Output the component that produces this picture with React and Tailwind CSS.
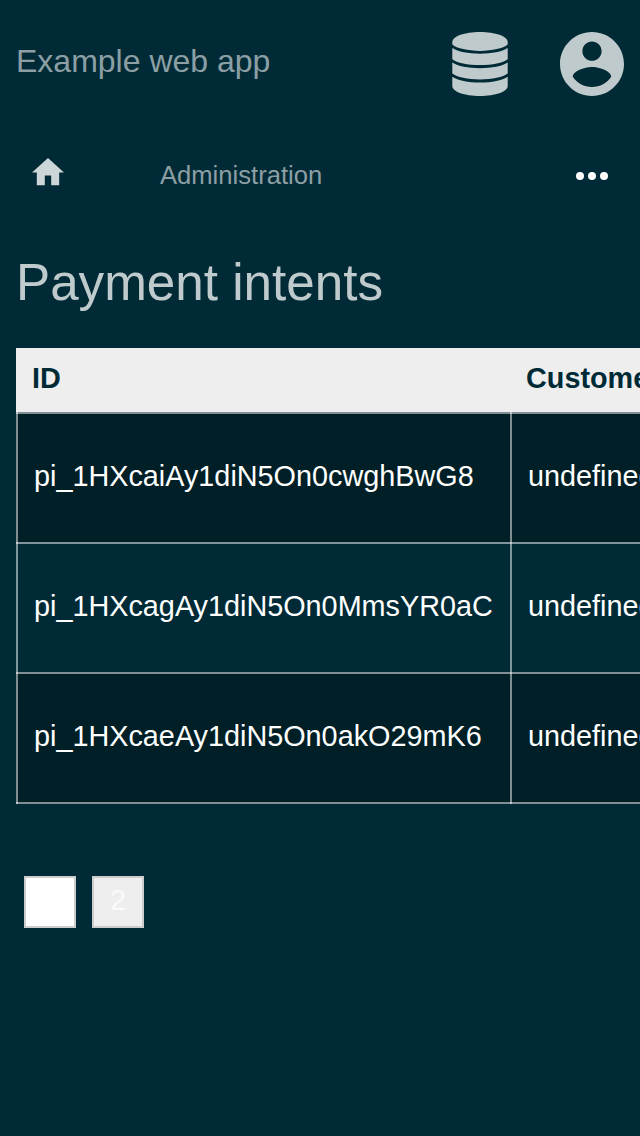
const rows = [
  "pi_1HXcaiAy1diN5On0cwghBwG8",
  "pi_1HXcagAy1diN5On0MmsYR0aC",
  "pi_1HXcaeAy1diN5On0akO29mK6",
];

function DatabaseIcon() {
  return (
    <svg viewBox="0 0 64 64" className="size-16 fill-[#bfcacd]" aria-hidden="true">
      <path d="M32 0C16.7 0 4.3 4.3 4.3 10V12.6C9 16.5 19.5 18.9 32 18.9S55 16.5 59.7 12.6V10C59.7 4.3 47.3 0 32 0Z" />
      <path d="M4.3 16.1C10 19.7 20 21.8 32 21.8S54 19.7 59.7 16.1V27.2C55 30.8 44.5 33.1 32 33.1S9 30.8 4.3 27.2Z" />
      <path d="M4.3 30.5C10 34.1 20 36.2 32 36.2S54 34.1 59.7 30.5V41.6C55 45.2 44.5 47.5 32 47.5S9 45.2 4.3 41.6Z" />
      <path d="M4.3 44.8C10 48.4 20 50.6 32 50.6S54 48.4 59.7 44.8V54C59.7 59.7 47.3 64 32 64S4.3 59.7 4.3 54Z" />
    </svg>
  );
}

function AccountIcon() {
  return (
    <svg viewBox="2 2 20 20" className="size-16 fill-[#bfcacd]" aria-hidden="true">
      <path d="M12 2C6.48 2 2 6.48 2 12s4.48 10 10 10 10-4.48 10-10S17.52 2 12 2zm0 3c1.66 0 3 1.34 3 3s-1.34 3-3 3-3-1.34-3-3 1.34-3 3-3zm0 14.2c-2.5 0-4.71-1.28-6-3.22.03-1.99 4-3.08 6-3.08 1.99 0 5.97 1.09 6 3.08-1.29 1.94-3.5 3.22-6 3.22z" />
    </svg>
  );
}

export default function App() {
  return (
    <div className="h-[1136px] w-full overflow-hidden bg-[#002b36] px-4 font-['Liberation_Sans',Arial,sans-serif]">
      <header className="flex h-32 items-center justify-between">
        <div className="pb-1.5 text-[32px] leading-[40px] text-[#8c9fa4]">Example web app</div>
        <div className="flex gap-12">
          <DatabaseIcon />
          <AccountIcon />
        </div>
      </header>
      <nav className="flex h-24 items-center">
        <svg viewBox="2 3 20 17" className="mb-2 ml-4 h-[27.2px] w-8 fill-[#ccd5d7]" aria-hidden="true">
          <path d="M10 20v-6h4v6h5v-8h3L12 3 2 12h3v8z" />
        </svg>
        <div className="ml-24 pb-0.5 text-[25.6px] leading-8 text-[#8c9fa4]">Administration</div>
        <div className="mr-4 ml-auto flex gap-1">
          <i className="size-2 rounded-full bg-white" />
          <i className="size-2 rounded-full bg-white" />
          <i className="size-2 rounded-full bg-white" />
        </div>
      </nav>
      <h1 className="mt-[29px] h-[95px] text-[51.2px] leading-[60px] text-[#bfcacd]">Payment intents</h1>
      <section className="w-[900px] text-[28.8px] leading-8">
        <div className="grid h-16 grid-cols-[494px_1fr] items-center bg-[#eeeeee] pb-1 font-bold text-[#002b36]">
          <div className="pl-4">ID</div>
          <div className="pl-4">Customer</div>
        </div>
        {rows.map((id) => (
          <div
            key={id}
            className="group grid h-[130px] grid-cols-[494px_1fr] border-t-2 border-white/50 text-white odd:bg-[#002b36] even:bg-[#001f27] last:h-[132px] last:border-b-2"
          >
            <div className="-mt-0.5 flex items-center border-l-2 border-white/50 pb-0.5 pl-4 group-last:-mb-0.5 group-last:pb-1">{id}</div>
            <div className="-mt-0.5 flex items-center border-l-2 border-white/50 pb-0.5 pl-4 group-last:-mb-0.5 group-last:pb-1">undefined</div>
          </div>
        ))}
      </section>
      <div className="mt-[72px] ml-2 flex gap-4 text-[28.8px] text-[#fafafa]">
        <button className="flex size-[52px] justify-center border-2 border-[#cccccc] bg-white leading-[44px] text-white">1</button>
        <button className="flex size-[52px] justify-center border-2 border-[#cccccc] bg-[#eeeeee] leading-[44px]">2</button>
      </div>
    </div>
  );
}
